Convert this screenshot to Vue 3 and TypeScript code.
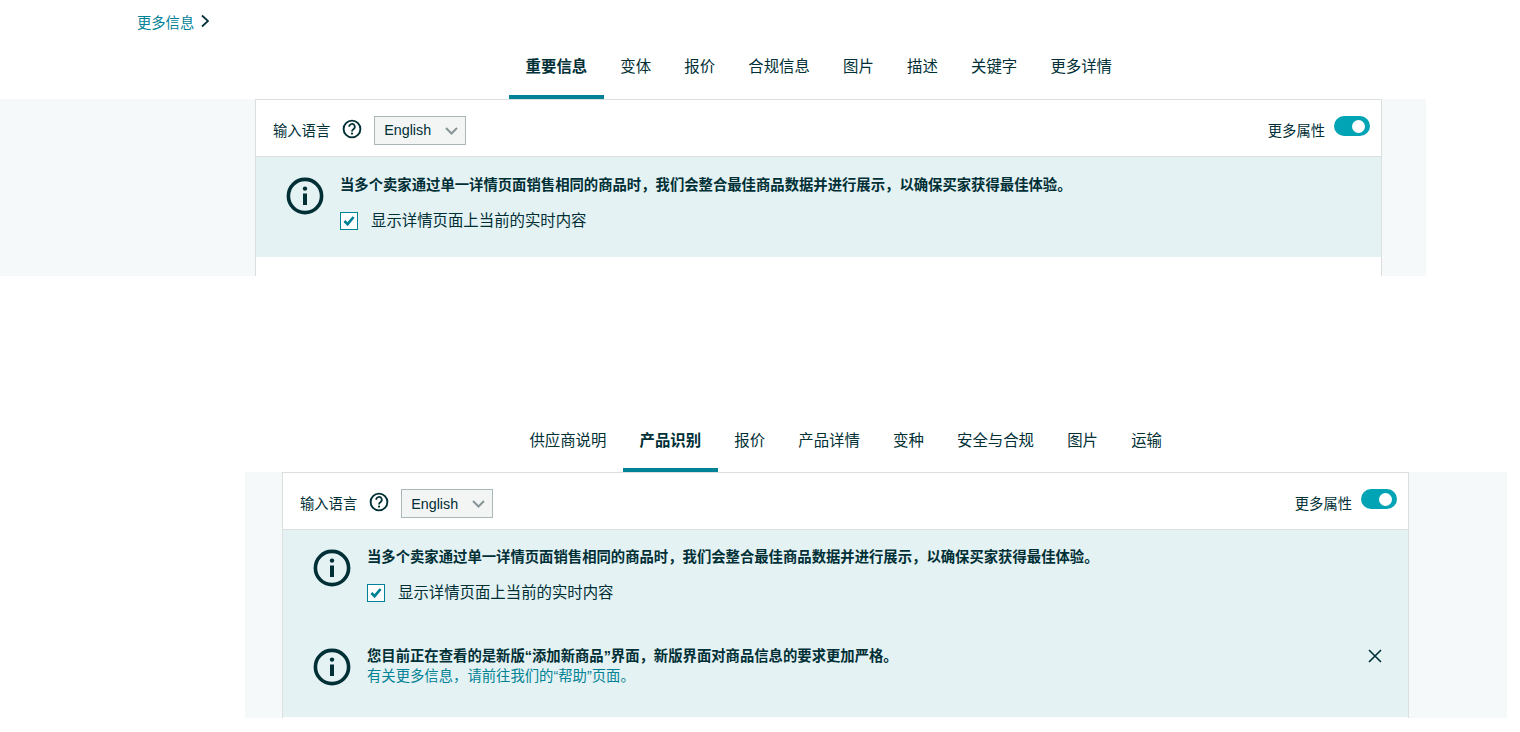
<script setup lang="ts">
interface Tab { label: string; active?: boolean }
interface Section { id: string; tabs: Tab[] }

const firstTabs: Tab[] = [
  { label: '重要信息', active: true },
  { label: '变体' },
  { label: '报价' },
  { label: '合规信息' },
  { label: '图片' },
  { label: '描述' },
  { label: '关键字' },
  { label: '更多详情' },
]
const secondTabs: Tab[] = [
  { label: '供应商说明' },
  { label: '产品识别', active: true },
  { label: '报价' },
  { label: '产品详情' },
  { label: '变种' },
  { label: '安全与合规' },
  { label: '图片' },
  { label: '运输' },
]
const sections: Section[] = [
  { id: 'one', tabs: firstTabs },
  { id: 'two', tabs: secondTabs },
]
</script>

<template>
  <div class="page">
    <a class="more-link">更多信息
      <svg class="chev" width="10" height="14" viewBox="0 0 10 14"><path d="M2 1.5 L8 7 L2 12.5" fill="none" stroke="#002f36" stroke-width="1.7"/></svg>
    </a>

    <section v-for="s in sections" :key="s.id" :class="['sec', s.id]">
      <nav class="tabs">
        <div v-for="t in s.tabs" :key="t.label" :class="['tab', { active: t.active }]">{{ t.label }}</div>
      </nav>
      <div class="band">
        <div class="panel">
          <div class="head">
            <span class="lang">输入语言</span>
            <svg class="q" width="20" height="20" viewBox="0 0 20 20">
              <circle cx="10" cy="10" r="8.4" fill="none" stroke="#002f36" stroke-width="1.9"/>
              <path d="M7.2 7.8a2.8 2.8 0 1 1 4.2 2.4c-1 .6-1.4 1.1-1.4 2.2" fill="none" stroke="#002f36" stroke-width="1.7"/>
              <circle cx="10" cy="14.6" r="1.1" fill="#002f36"/>
            </svg>
            <div class="select">
              <span>English</span>
              <svg width="13" height="8" viewBox="0 0 13 8"><path d="M1 1 L6.5 6.5 L12 1" fill="none" stroke="#879596" stroke-width="2"/></svg>
            </div>
            <span class="spacer"></span>
            <span class="attrs">更多属性</span>
            <span class="toggle"><i></i></span>
          </div>
          <div class="alert">
            <div class="msg">
              <svg class="info" width="38" height="38" viewBox="0 0 38 38">
                <circle cx="19" cy="19" r="16.6" fill="none" stroke="#002f36" stroke-width="3.6"/>
                <rect x="17" y="16.5" width="4" height="11.5" fill="#002f36"/>
                <circle cx="19" cy="11.6" r="2.2" fill="#002f36"/>
              </svg>
              <div class="body">
                <div class="title">当多个卖家通过单一详情页面销售相同的商品时，我们会整合最佳商品数据并进行展示，以确保买家获得最佳体验。</div>
                <label class="check">
                  <span class="box">
                    <svg width="12" height="10" viewBox="0 0 12 10"><path d="M1.4 5 L4.6 8.2 L10.6 1" fill="none" stroke="#008296" stroke-width="2.7"/></svg>
                  </span>
                  显示详情页面上当前的实时内容
                </label>
              </div>
            </div>
            <div v-if="s.id === 'two'" class="msg second">
              <svg class="info" width="38" height="38" viewBox="0 0 38 38">
                <circle cx="19" cy="19" r="16.6" fill="none" stroke="#002f36" stroke-width="3.6"/>
                <rect x="17" y="16.5" width="4" height="11.5" fill="#002f36"/>
                <circle cx="19" cy="11.6" r="2.2" fill="#002f36"/>
              </svg>
              <div class="body">
                <div class="title">您目前正在查看的是新版“添加新商品”界面，新版界面对商品信息的要求更加严格。</div>
                <a class="help">有关更多信息，请前往我们的“帮助”页面。</a>
              </div>
              <svg class="close" width="14" height="14" viewBox="0 0 14 14"><path d="M1 1 L13 13 M13 1 L1 13" fill="none" stroke="#002f36" stroke-width="1.6"/></svg>
            </div>
          </div>
        </div>
      </div>
    </section>
  </div>
</template>

<style scoped>
.page {
  width: 1520px;
  height: 732px;
  overflow: hidden;
  background: #fff;
  font-family: "Liberation Sans", "Noto Sans CJK SC", sans-serif;
  font-size: 14.3px;
  color: #002f36;
}
.more-link {
  display: flex;
  align-items: flex-start;
  height: 44px;
  margin-left: 137px;
  padding-top: 13px;
  box-sizing: border-box;
  line-height: 21px;
  color: #008296;
}
.chev { margin: 1px 0 0 6px; }
.tabs { display: flex; height: 55px; }
.one .tabs { margin-left: 509px; }
.two { margin-top: 141px; }
.two .tabs { margin-left: 512.8px; }
.tab {
  box-sizing: border-box;
  height: 55px;
  padding: 12px 16.6px 0;
  font-size: 15.4px;
  line-height: 22px;
  border-bottom: 4px solid transparent;
}
.two .tab { padding-top: 13px; }
.tab.active {
  font-weight: 700;
  border-bottom-color: #008296;
}
.band { background: #f5f9fa; box-sizing: border-box; }
.one .band { width: 1426px; height: 177px; padding-left: 255px; }
.two .band { width: 1262px; height: 246px; margin-left: 245px; padding-left: 37px; }
.panel {
  box-sizing: border-box;
  width: 1127px;
  height: 100%;
  overflow: hidden;
  background: #fff;
  border: 1px solid #dcdfdf;
  border-bottom: 0;
}
.head {
  box-sizing: border-box;
  display: flex;
  align-items: flex-start;
  height: 57px;
  padding: 16px 11px 0 17px;
  border-bottom: 1px solid #dcdfdf;
}
.lang { margin-top: 5px; line-height: 20px; }
.q { margin: 3px 0 0 12px; }
.select {
  box-sizing: border-box;
  display: flex;
  align-items: center;
  justify-content: space-between;
  width: 92px;
  height: 29px;
  margin-left: 12px;
  padding: 0 7px 0 9px;
  background: #f3f5f5;
  border: 1px solid #aab7b8;
  line-height: 27px;
}
.two .select span { margin-top: 1px; }
.spacer { flex: 1; }
.attrs { margin-top: 5px; line-height: 20px; }
.toggle {
  position: relative;
  width: 36px;
  height: 20px;
  margin-left: 9px;
  border-radius: 10px;
  background: #00a4b4;
}
.toggle i {
  position: absolute;
  top: 4px;
  right: 5px;
  width: 13px;
  height: 13px;
  border-radius: 50%;
  background: #fff;
}
.alert {
  background: #e4f2f3;
  padding: 18px 0 27px 30px;
  font-size: 14.35px;
}
.two .alert { padding-top: 17px; padding-bottom: 31px; }
.msg { position: relative; display: flex; gap: 16px; }
.msg.second { margin-top: 44px; }
.info { flex: none; margin-top: 2px; }
.title { font-weight: 700; line-height: 20px; }
.check {
  display: flex;
  align-items: center;
  gap: 13px;
  margin-top: 17px;
  font-size: 15.4px;
  line-height: 18px;
}
.box {
  box-sizing: border-box;
  display: flex;
  align-items: center;
  justify-content: center;
  width: 18px;
  height: 18px;
  background: #fff;
  border: 1px solid #008296;
}
.help { display: block; line-height: 20px; color: #008296; }
.close { position: absolute; top: 3px; left: 1055px; }
</style>
